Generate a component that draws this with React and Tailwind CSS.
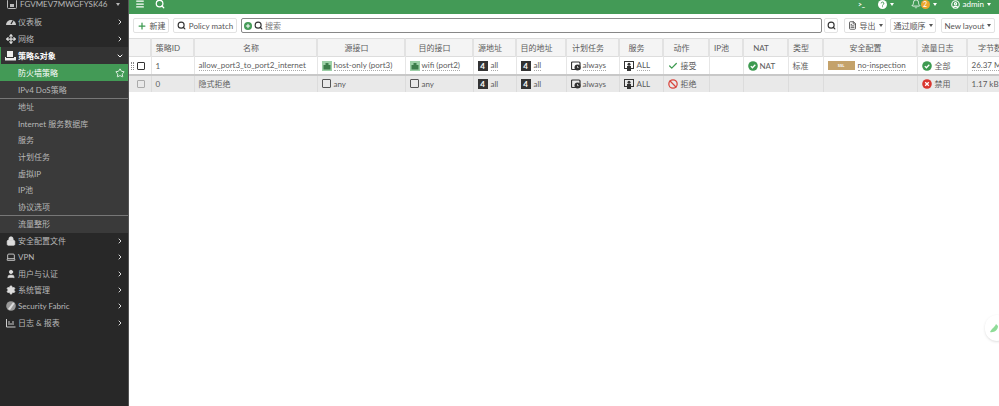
import React from 'react';
import { ChevronRight, ChevronDown, Star, Menu, Search, Plus, Move, Lock, Laptop, User, Settings, Check, Ban, Bell, CircleUser, FileText } from 'lucide-react';

const FONT = "font-['Lato','Noto_Sans_CJK_SC',sans-serif]";

const Caret = () => <span className="block w-0 h-0 border-x-[2px] border-x-transparent border-t-[3px] border-t-current" />;

// Small drawn icons
const PortIcon = () => (
  <svg width="10" height="10" viewBox="0 0 10 10" className="shrink-0">
    <rect width="10" height="10" fill="#9ccfa6" />
    <rect x="1.5" y="4" width="7" height="4.5" fill="#3c7d4a" />
    <rect x="3.5" y="2" width="3" height="2" fill="#3c7d4a" />
  </svg>
);

const EmptyBox = () => <span className="inline-block w-[9px] h-[9px] border border-[#555] rounded-[1px] shrink-0" />;

const AddrIcon = () => (
  <span className="w-[10px] h-[10px] bg-[#333] text-white text-[8px] leading-[10px] text-center font-bold shrink-0">4</span>
);

const ScheduleIcon = () => (
  <svg width="10" height="10" viewBox="0 0 10 10" className="shrink-0">
    <rect x="0.5" y="1" width="8.5" height="7.5" rx="1" fill="none" stroke="#333" strokeWidth="1.2" />
    <circle cx="6.5" cy="6.5" r="3" fill="#333" />
    <path d="M6.5 5v1.6h1.2" stroke="#fff" strokeWidth="0.7" fill="none" />
  </svg>
);

const ServiceIcon = () => (
  <svg width="10" height="10" viewBox="0 0 10 10" className="shrink-0">
    <rect x="0.5" y="0.5" width="9" height="7" fill="none" stroke="#333" strokeWidth="1" />
    <circle cx="5" cy="3.3" r="1.5" fill="#333" />
    <rect x="3" y="5" width="4" height="5" fill="#333" />
  </svg>
);

const OkIcon = () => (
  <svg width="10" height="10" viewBox="0 0 10 10" className="shrink-0">
    <circle cx="5" cy="5" r="4.8" fill="#3d9a50" />
    <path d="M2.8 5.1l1.6 1.6 2.9-3" stroke="#fff" strokeWidth="1.3" fill="none" />
  </svg>
);

const OffIcon = () => (
  <svg width="10" height="10" viewBox="0 0 10 10" className="shrink-0">
    <circle cx="5" cy="5" r="4.8" fill="#d9362f" />
    <path d="M3.2 3.2l3.6 3.6M6.8 3.2l-3.6 3.6" stroke="#fff" strokeWidth="1.3" />
  </svg>
);

const GaugeIcon = () => (
  <svg width="10" height="10" viewBox="0 0 10 10">
    <path d="M0 8a5 5 0 1 1 10 0z" fill="#ccc" />
    <path d="M5 7L7 3.5" stroke="#262626" strokeWidth="1.2" />
  </svg>
);

const FabricIcon = () => (
  <svg width="10" height="10" viewBox="0 0 10 10">
    <circle cx="5" cy="5" r="4.8" fill="#999" />
    <path d="M2 8L7 1.5l1.5 1L4 9z" fill="#ddd" />
  </svg>
);

const LogIcon = () => (
  <svg width="10" height="10" viewBox="0 0 10 10">
    <path d="M.5 1v8h9" stroke="#ccc" fill="none" />
    <path d="M3 3v4M5 5v2M7 3v4" stroke="#ccc" />
  </svg>
);

const PolicyIcon = () => (
  <svg width="11" height="10" viewBox="0 0 11 10">
    <path d="M2 0h6v6H2z" fill="#eee" />
    <path d="M0 6h11v3.5H0z" fill="#eee" />
    <path d="M1 6.5h8" stroke="#333" />
  </svg>
);

const DeviceIcon = () => (
  <svg width="10" height="10" viewBox="0 0 10 10">
    <rect x="0.5" y="0.5" width="9" height="9" rx="1" fill="none" stroke="#bbb" />
    <rect x="3" y="5" width="4" height="3" fill="#bbb" />
  </svg>
);

const menuTop = [
  { label: '仪表板', icon: <GaugeIcon /> },
  { label: '网络', icon: <Move size={10} strokeWidth={3} /> },
];

const subItems = [
  { label: '防火墙策略', active: true },
  { label: 'IPv4 DoS策略', divider: true },
  { label: '地址' },
  { label: 'Internet 服务数据库' },
  { label: '服务' },
  { label: '计划任务' },
  { label: '虚拟IP' },
  { label: 'IP池' },
  { label: '协议选项', divider: true },
  { label: '流量整形' },
];

const menuBottom = [
  { label: '安全配置文件', icon: <Lock size={10} fill="#ddd" strokeWidth={2} /> },
  { label: 'VPN', icon: <Laptop size={10} strokeWidth={2} /> },
  { label: '用户与认证', icon: <User size={10} fill="#ddd" strokeWidth={2} /> },
  { label: '系统管理', icon: <Settings size={10} fill="#ddd" strokeWidth={2} /> },
  { label: 'Security Fabric', icon: <FabricIcon /> },
  { label: '日志 & 报表', icon: <LogIcon /> },
];

const MenuRow = ({ item }) => (
  <div className="h-[16.4px] flex items-center pl-[5px] pr-[4px] text-[#b8b8b8]">
    <span className="w-[11px] flex justify-center text-[#ddd]">{item.icon}</span>
    <span className="ml-[2px] flex-1">{item.label}</span>
    <ChevronRight size={8} strokeWidth={3} className="text-[#ddd]" />
  </div>
);

const Sidebar = () => (
  <aside className="w-[129px] shrink-0 bg-[#282828] text-[8px] leading-none border-r border-[#555]">
    <div className="h-[14px] pl-[7px] pr-[8px] text-[#b8b8b8]">
      <div className="h-[8px] flex items-center">
        <span className="h-[10px] flex items-center"><DeviceIcon /></span>
        <span className="ml-[3px] flex-1">FGVMEV7MWGFYSK46</span>
        <Caret />
      </div>
    </div>
    {menuTop.map((item) => <MenuRow key={item.label} item={item} />)}
    <div className="h-[17.5px] flex items-center pl-[4px] pr-[4px] bg-[#333] border-l-[1px] border-[#3e9b52] text-white font-bold">
      <span className="w-[11px] flex justify-center"><PolicyIcon /></span>
      <span className="ml-[2px] flex-1">策略&对象</span>
      <ChevronDown size={8} strokeWidth={3} />
    </div>
    <div className="bg-[#3a3a3a]">
      {subItems.map((s) => (
        <div
          key={s.label}
          className={s.active
            ? 'h-[17px] flex items-center pl-[18px] pr-[2px] bg-[#439a56] text-white'
            : `h-[16.6px] flex items-center pl-[18px] text-[#b8b8b8] ${s.divider ? 'border-b border-[#777] box-content' : ''}`}
        >
          <span className="flex-1">{s.label}</span>
          {s.active && <Star size={10} strokeWidth={2} className="mr-[1px]" />}
        </div>
      ))}
    </div>
    {menuBottom.map((item) => <MenuRow key={item.label} item={item} />)}
  </aside>
);

// Policy table
const columns = [
  ['', 22], ['策略ID', 43], ['名称', 123], ['源接口', 88], ['目的接口', 68], ['源地址', 43], ['目的地址', 50],
  ['计划任务', 53], ['服务', 44], ['动作', 46], ['IP池', 34], ['NAT', 45], ['类型', 35], ['安全配置', 94],
  ['流量日志', 50], ['字节数', 55],
];

const Cell = ({ children, line = 'border-[#e6e6e6]', gap = 'gap-[3px]' }) => (
  <td className={`border-r ${line} pl-[4px] whitespace-nowrap overflow-hidden`}>
    <div className={`flex items-center ${gap}`}>{children}</div>
  </td>
);

const Dotted = ({ children }) => <span className="border-b border-dotted border-[#aaa] leading-[9px]">{children}</span>;

const PolicyTable = () => (
  <table className="table-fixed border-collapse w-[893px] text-[8px] leading-[10px] text-[#5c5c5c] mt-px">
    <colgroup>
      {columns.map(([name, w]) => <col key={name} style={{ width: w }} />)}
    </colgroup>
    <thead>
      <tr className="h-[18px] bg-[#f4f4f4] border-y border-[#ddd]">
        {columns.map(([name]) => (
          <th key={name} className="font-normal text-center pr-[9px] border-r-2 border-[#e2e2e2] overflow-hidden whitespace-nowrap">{name}</th>
        ))}
      </tr>
    </thead>
    <tbody>
      <tr className="h-[18px] bg-white border-b-2 border-[#c8c8c8] [&>td]:pt-px">
        <td className="border-r border-[#e6e6e6]">
          <div className="flex items-center pl-[2px] gap-[3px]">
            <span className="w-[3px] h-[8px] border-x border-dotted border-[#888]" />
            <span className="w-[8px] h-[8px] border border-[#333] rounded-[1px]" />
          </div>
        </td>
        <Cell>1</Cell>
        <Cell><Dotted>allow_port3_to_port2_internet</Dotted></Cell>
        <Cell gap="gap-[2px]"><PortIcon /><Dotted>host-only (port3)</Dotted></Cell>
        <Cell gap="gap-[2px]"><PortIcon /><Dotted>wifi (port2)</Dotted></Cell>
        <Cell><AddrIcon /><Dotted>all</Dotted></Cell>
        <Cell><AddrIcon /><Dotted>all</Dotted></Cell>
        <Cell gap="gap-[2px]"><ScheduleIcon /><Dotted>always</Dotted></Cell>
        <Cell><ServiceIcon /><Dotted>ALL</Dotted></Cell>
        <Cell><Check size={10} strokeWidth={3} className="text-[#3d9a50]" />接受</Cell>
        <Cell />
        <Cell gap="gap-[2px]"><OkIcon />NAT</Cell>
        <Cell>标准</Cell>
        <Cell>
          <span className="w-[27px] h-[9px] bg-[#c4a26a] text-white text-[4px] leading-[9px] font-bold text-center shrink-0">SSL</span>
          <Dotted>no-inspection</Dotted>
        </Cell>
        <Cell><OkIcon />全部</Cell>
        <Cell><Dotted>26.37 MB</Dotted></Cell>
      </tr>
      <tr className="h-[17px] bg-[#e9e9e9]">
        <td className="border-r border-[#dcdcdc]">
          <div className="pl-[8px]"><span className="block w-[8px] h-[8px] border border-[#aaa] rounded-[1px]" /></div>
        </td>
        <Cell line="border-[#dcdcdc]">0</Cell>
        <Cell line="border-[#dcdcdc]">隐式拒绝</Cell>
        <Cell line="border-[#dcdcdc]"><EmptyBox />any</Cell>
        <Cell line="border-[#dcdcdc]"><EmptyBox />any</Cell>
        <Cell line="border-[#dcdcdc]"><AddrIcon />all</Cell>
        <Cell line="border-[#dcdcdc]"><AddrIcon />all</Cell>
        <Cell line="border-[#dcdcdc]" gap="gap-[2px]"><ScheduleIcon />always</Cell>
        <Cell line="border-[#dcdcdc]"><ServiceIcon />ALL</Cell>
        <Cell line="border-[#dcdcdc]"><Ban size={10} strokeWidth={3} className="text-[#d9453c]" />拒绝</Cell>
        <Cell line="border-[#dcdcdc]" />
        <Cell line="border-[#dcdcdc]" />
        <Cell line="border-[#dcdcdc]" />
        <Cell line="border-[#dcdcdc]" />
        <Cell line="border-[#dcdcdc]"><OffIcon />禁用</Cell>
        <Cell line="border-[#dcdcdc]">1.17 kB</Cell>
      </tr>
    </tbody>
  </table>
);

const ToolBtn = ({ children, className = '' }) => (
  <button className={`h-[15px] flex items-center justify-center gap-[3px] bg-white border border-[#e2e2e2] rounded-[2px] text-[#555] whitespace-nowrap ${className}`}>
    {children}
  </button>
);

export default function App() {
  return (
    <div className={`${FONT} w-[999px] h-[406px] flex overflow-hidden bg-white`}>
      <Sidebar />
      <main className="relative flex-1 min-w-0 overflow-hidden">
        <header className="h-[14px] bg-[#439a56] text-white text-[8px] leading-none pl-[6px]">
          <div className="h-[8px] flex items-center">
            <Menu size={10} strokeWidth={3} />
            <Search size={10} strokeWidth={3} className="ml-[10px]" />
            <div className="ml-auto flex items-center pr-[8px]">
              <span className="text-[7px] font-bold tracking-tighter">&gt;_</span>
              <svg width="9" height="9" viewBox="0 0 10 10" className="ml-[13px]">
                <circle cx="5" cy="5" r="5" fill="#fff" />
                <path d="M3.5 3.8a1.5 1.5 0 1 1 2 1.4c-.4.2-.5.5-.5 1M5 7v1" stroke="#439a56" fill="none" strokeWidth="1" />
              </svg>
              <span className="ml-[3px]"><Caret /></span>
              <Bell size={10} className="ml-[17px]" />
              <span className="w-[9px] h-[9px] rounded-full bg-[#eda62c] text-[7px] leading-[9px] text-center">2</span>
              <span className="ml-[3px]"><Caret /></span>
              <CircleUser size={9} strokeWidth={3} className="ml-[14px]" />
              <span className="ml-[3px]">admin</span>
              <span className="ml-[3px]"><Caret /></span>
            </div>
          </div>
        </header>
        <div className="h-[23px] flex items-center pl-[4px] text-[8px]">
          <ToolBtn className="w-[36px] border-[#7dbb8b]"><Plus size={10} strokeWidth={3} className="text-[#3d9a50]" />新建</ToolBtn>
          <ToolBtn className="ml-[4px] w-[64px]"><Search size={9} strokeWidth={3} className="text-[#333]" />Policy match</ToolBtn>
          <div className="ml-[4px] w-[581px] h-[15px] flex items-center gap-[2px] px-[2px] border border-[#888] rounded-[2px] text-[#777]">
            <span className="w-[8px] h-[8px] rounded-full bg-[#439a56] text-white flex items-center justify-center"><Plus size={6} strokeWidth={4} /></span>
            <Search size={9} strokeWidth={3} className="text-[#333]" />
            搜索
          </div>
          <ToolBtn className="ml-[2px] w-[14px]"><Search size={9} strokeWidth={3} className="text-[#333]" /></ToolBtn>
          <ToolBtn className="ml-[6px] w-[42px]"><FileText size={9} className="text-[#333]" />导出<Caret /></ToolBtn>
          <ToolBtn className="ml-[4px] w-[46px]">通过顺序<Caret /></ToolBtn>
          <ToolBtn className="ml-[5px] w-[54px]">New layout<Caret /></ToolBtn>
        </div>
        <PolicyTable />
        <div className="absolute right-[-10px] top-[315px] w-[24px] h-[26px] rounded-full bg-white shadow-sm flex items-center justify-center">
          <svg width="10" height="10" viewBox="0 0 10 10" className="-ml-[7px]">
            <path d="M1 9 C3 5 6 4 7 1 L9 3 C9 7 5 10 1 9Z" fill="#8fdc98" />
          </svg>
        </div>
      </main>
    </div>
  );
}
